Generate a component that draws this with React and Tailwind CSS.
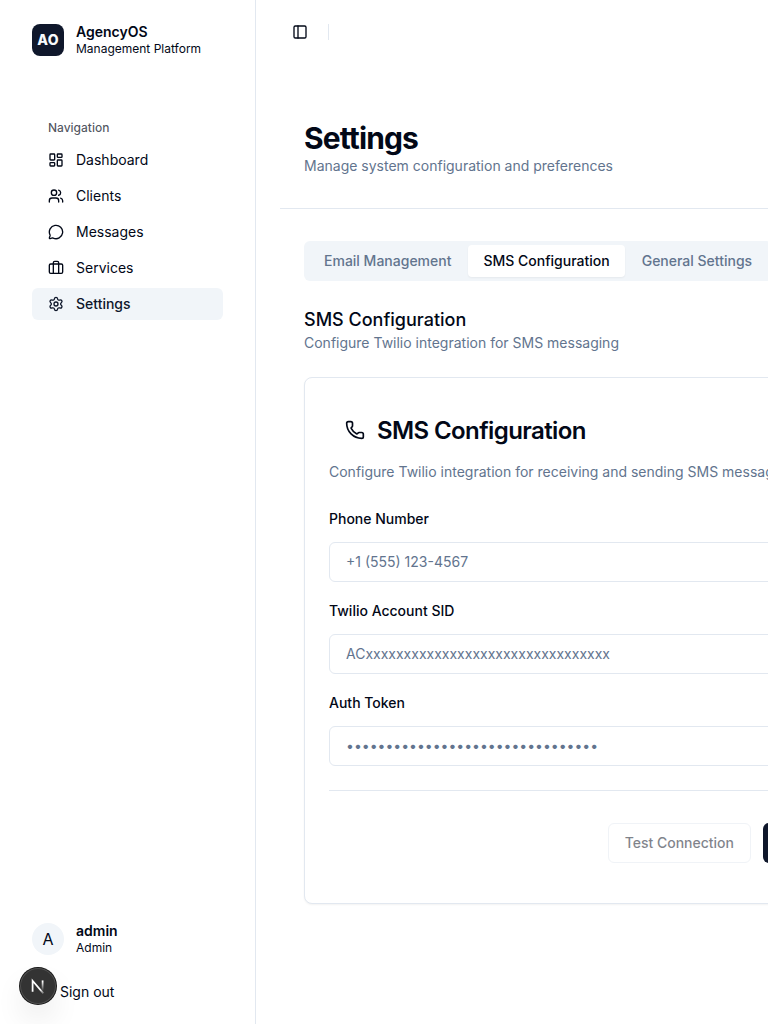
import React from "react";
import {
  LayoutDashboard,
  Users,
  MessageCircle,
  Settings,
  PanelLeft,
  Phone,
  LogOut,
} from "lucide-react";

function LuggageIcon() {
  return (
    <svg className="size-4 shrink-0" viewBox="0 0 24 24" fill="none" stroke="currentColor" strokeWidth="2" strokeLinecap="round" strokeLinejoin="round">
      <rect width="20" height="14" x="2" y="6" rx="2" />
      <path d="M16 20V4a2 2 0 0 0-2-2h-4a2 2 0 0 0-2 2v16" />
    </svg>
  );
}

const NAV = [
  { label: "Dashboard", icon: <LayoutDashboard className="size-4 shrink-0" /> },
  { label: "Clients", icon: <Users className="size-4 shrink-0" /> },
  { label: "Messages", icon: <MessageCircle className="size-4 shrink-0" /> },
  { label: "Services", icon: <LuggageIcon /> },
  { label: "Settings", icon: <Settings className="size-4 shrink-0" />, active: true },
];

function Sidebar() {
  return (
    <aside className="flex w-64 shrink-0 flex-col border-r border-slate-200 px-8 pt-6 pb-4">
      <div className="flex h-8 items-center gap-3">
        <div className="flex size-8 items-center justify-center rounded-lg bg-slate-900 text-sm font-extrabold tracking-[0.02em] text-slate-50">
          AO
        </div>
        <div className="grid pt-0.5">
          <span className="text-sm leading-4 font-semibold">AgencyOS</span>
          <span className="text-xs leading-[18px]">Management Platform</span>
        </div>
      </div>

      <nav className="mt-14 flex flex-col">
        <div className="flex h-8 items-center px-4 text-xs font-medium text-[#020817]/70">Navigation</div>
        <ul className="flex flex-col gap-1">
          {NAV.map((item) => (
            <li
              key={item.label}
              className={
                item.active
                  ? "flex h-8 items-center gap-3 rounded-md bg-slate-100 px-4 text-sm font-medium text-slate-900"
                  : "flex h-8 items-center gap-3 rounded-md px-4 text-sm"
              }
            >
              {item.icon}
              <span>{item.label}</span>
            </li>
          ))}
        </ul>
      </nav>

      <div className="mt-auto flex h-8 items-center gap-3">
        <div className="flex size-8 items-center justify-center rounded-full bg-slate-100">A</div>
        <div className="grid pt-0.5">
          <span className="text-sm leading-4 font-semibold">admin</span>
          <span className="text-xs leading-[18px]">Admin</span>
        </div>
      </div>
      <button className="mt-[21px] flex h-8 items-center gap-3 text-left text-sm">
        <LogOut className="size-4" />
        Sign out
      </button>
    </aside>
  );
}

function Field({ label, placeholder, type = "text" }) {
  return (
    <label className="flex flex-col gap-4">
      <span className="text-sm leading-[14px] font-medium">{label}</span>
      <input
        type={type}
        placeholder={placeholder}
        className="h-10 w-full rounded-md border border-slate-200 bg-white px-4 pb-0.5 text-sm placeholder:text-slate-500"
      />
    </label>
  );
}

function SmsCard() {
  return (
    <section className="mt-6 flex h-[527px] flex-col rounded-lg border border-slate-200 bg-white px-6 pt-9 shadow-[0_1px_2px_0_rgba(0,0,0,0.05)]">
      <h3 className="flex h-8 items-center gap-3 px-4 text-2xl font-semibold tracking-tight">
        <Phone className="size-5" />
        <span className="pt-0.5">SMS Configuration</span>
      </h3>
      <p className="mt-4 text-sm text-slate-500">
        Configure Twilio integration for receiving and sending SMS messages
      </p>
      <div className="mt-[30px] flex flex-col gap-[22px]">
        <Field label="Phone Number" placeholder="+1 (555) 123-4567" />
        <Field label="Twilio Account SID" placeholder="ACxxxxxxxxxxxxxxxxxxxxxxxxxxxxxxxx" />
        <Field label="Auth Token" placeholder="••••••••••••••••••••••••••••••••" />
      </div>
      <div className="mt-6 flex justify-end gap-3 border-t border-slate-200 pt-8">
        <button className="h-10 rounded-md border border-slate-200 px-4 text-sm font-medium opacity-50">
          Test Connection
        </button>
        <button className="h-10 w-40 rounded-md bg-slate-900 text-sm font-medium text-slate-50" aria-label="Save" />
      </div>
    </section>
  );
}

function DevBadge() {
  return (
    <div className="absolute bottom-5 left-5 size-9 rounded-full bg-[#333333] shadow-[0_0_0_1px_#171717,inset_0_0_0_1px_rgba(255,255,255,0.14),0_16px_32px_-8px_rgba(0,0,0,0.24)]">
      <svg className="size-9" viewBox="0 0 36 36" fill="none">
        <defs>
          <linearGradient id="diag" x1="21" y1="21" x2="25" y2="26.5" gradientUnits="userSpaceOnUse">
            <stop stopColor="white" />
            <stop offset="1" stopColor="white" stopOpacity="0" />
          </linearGradient>
          <linearGradient id="stem" x1="23" y1="13.5" x2="23" y2="23" gradientUnits="userSpaceOnUse">
            <stop stopColor="white" />
            <stop offset="1" stopColor="white" stopOpacity="0" />
          </linearGradient>
        </defs>
        <path d="M23.4 25.4L12.6 12.8V23.8" stroke="url(#diag)" strokeWidth="1.75" />
        <path d="M22.6 12.4V23.8" stroke="url(#stem)" strokeWidth="1.75" />
      </svg>
    </div>
  );
}

export default function App() {
  return (
    <div className="relative flex h-screen w-full overflow-hidden bg-white font-[Inter,sans-serif] text-[#020817] antialiased">
      <Sidebar />
      <main className="flex min-w-0 flex-1 flex-col overflow-hidden pl-6">
        <div className="flex h-16 shrink-0 items-center gap-3 pl-3">
          <PanelLeft className="size-4" />
          <div className="ml-2 h-4 w-px bg-slate-200" />
        </div>
        <header className="mt-6 border-b border-slate-200 px-6 py-8">
          <h1 className="text-3xl font-bold tracking-[-0.029em]">Settings</h1>
          <p className="text-sm text-slate-500">Manage system configuration and preferences</p>
        </header>
        <div className="mt-8 ml-6 w-[644px]">
          <div className="inline-flex h-10 items-center rounded-md bg-slate-100 p-1 text-sm font-medium whitespace-nowrap text-slate-500">
            <div className="flex h-8 items-center px-4">Email Management</div>
            <div className="mx-[0.5px] flex h-8 items-center rounded-sm bg-white px-[15.5px] text-[#020817] shadow-[0_1px_2px_0_rgba(0,0,0,0.05)]">SMS Configuration</div>
            <div className="flex h-8 items-center px-4">General Settings</div>
          </div>
          <h2 className="mt-[25px] text-lg leading-[27px] font-medium">SMS Configuration</h2>
          <p className="text-sm text-slate-500">Configure Twilio integration for SMS messaging</p>
          <SmsCard />
        </div>
      </main>
      <DevBadge />
    </div>
  );
}
